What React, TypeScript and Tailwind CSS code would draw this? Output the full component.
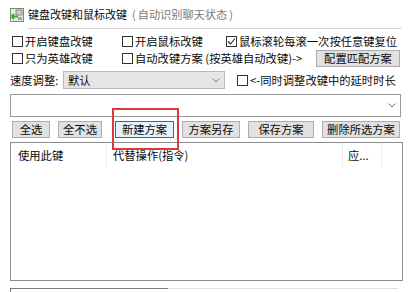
import React from "react";

const font = { fontFamily: '"Noto Sans CJK SC", "Noto Sans", sans-serif' };

function Box({ checked = false }: { checked?: boolean }) {
  return (
    <span className="w-[11px] h-[11px] border border-[#333333] bg-white flex items-center justify-center shrink-0">
      {checked && (
        <svg width="9" height="9" viewBox="0 0 9 9">
          <path d="M1 4.5 L3.5 7 L8 1.5" fill="none" stroke="#222" strokeWidth="1.1" />
        </svg>
      )}
    </span>
  );
}

function Check({ label, checked, className = "" }: { label: string; checked?: boolean; className?: string }) {
  return (
    <div className={`flex items-center gap-[2px] ${className}`}>
      <Box checked={checked} />
      <span className="leading-none text-[11.3px] text-[#0a0a0a]">{label}</span>
    </div>
  );
}

function Btn({ label, w, active = false }: { label: string; w: string; active?: boolean }) {
  return (
    <div
      className={`${w} h-[17px] flex items-center justify-center border text-[11.3px] leading-none text-[#0a0a0a] ${
        active ? "bg-[#e5f1fb] border-[#0078d7]" : "bg-[#e1e1e1] border-[#adadad]"
      }`}
    >
      {label}
    </div>
  );
}

function Chevron() {
  return (
    <svg width="8" height="5" viewBox="0 0 8 5">
      <path d="M0.5 0.5 L4 4 L7.5 0.5" fill="none" stroke="#777" strokeWidth="1" />
    </svg>
  );
}

export default function App() {
  return (
    <div className="w-[415px] h-[292px] bg-white overflow-hidden flex flex-col" style={font}>
      {/* Title */}
      <div className="flex items-center h-[18px] mt-[6px] pl-[10px]">
        <svg width="14" height="14" viewBox="0 0 14 14" className="shrink-0">
          <rect x="0.5" y="0.5" width="13" height="13" fill="#e8eee4" stroke="#7c8a78" />
          <rect x="6" y="2" width="6" height="5" fill="#c9d3c4" stroke="#6f7c6b" strokeWidth="0.8" />
          <path d="M1.5 8.5 H8 M1.5 8.5 L4 6 M1.5 8.5 L4 11" stroke="#3aa635" strokeWidth="1.8" fill="none" />
          <rect x="8" y="9" width="4" height="3" fill="#9aa896" />
        </svg>
        <span className="ml-[4px] text-[11px] leading-none text-[#0a0a0a]">键盘改键和鼠标改键</span>
        <span className="ml-[5px] text-[11px] leading-none text-[#7a7a7a]">(</span>
        <span className="ml-[2px] text-[11.2px] leading-none text-[#7a7a7a]">自动识别聊天状态</span>
        <span className="ml-[2px] text-[11px] leading-none text-[#7a7a7a]">)</span>
      </div>
      <div className="mt-[4px] ml-[28px] mr-[13px] h-px bg-[#d6d6d6]" />

      {/* Row 1 */}
      <div className="flex items-center h-[16px] mt-[5px] pl-[12px]">
        <Check label="开启键盘改键" className="w-[110px]" />
        <Check label="开启鼠标改键" className="w-[104px]" />
        <Check label="鼠标滚轮每滚一次按任意键复位" checked />
      </div>

      {/* Row 2 */}
      <div className="flex items-center h-[18px] pl-[12px]">
        <Check label="只为英雄改键" className="w-[110px]" />
        <Check label="自动改键方案 (按英雄自动改键)->" className="w-[194px]" />
        <Btn label="配置匹配方案" w="w-[84px]" />
      </div>

      {/* Row 3 */}
      <div className="flex items-center h-[18px] mt-[4px] pl-[10px]">
        <span className="text-[11.3px] leading-none text-[#0a0a0a] w-[53px]">速度调整:</span>
        <div className="w-[162px] h-[18px] bg-[#e5e5e5] border border-[#b9b9b9] flex items-center pl-[4px] pr-[4px]">
          <span className="text-[11.3px] leading-none text-[#0a0a0a] flex-1">默认</span>
          <Chevron />
        </div>
        <Check label="<-同时调整改键中的延时时长" className="ml-[12px]" />
      </div>

      {/* Row 4 */}
      <div className="mt-[5px] ml-[10px] w-[391px] h-[23px] border border-[#9a9a9a] bg-white flex items-center justify-end pr-[4px]">
        <Chevron />
      </div>

      {/* Row 5 buttons */}
      <div className="flex items-center h-[17px] mt-[4px] pl-[12px]">
        <Btn label="全选" w="w-[38px]" />
        <div className="w-[8px]" />
        <Btn label="全不选" w="w-[44px]" />
        <div className="w-[13px]" />
        <div className="relative">
          <Btn label="新建方案" w="w-[59px]" active />
          <div className="absolute left-[-3px] top-[-13px] w-[67px] h-[42px] border-2 border-[#d93a3a]" />
        </div>
        <div className="w-[8px]" />
        <Btn label="方案另存" w="w-[58px]" />
        <div className="w-[8px]" />
        <Btn label="保存方案" w="w-[66px]" />
        <div className="w-[8px]" />
        <Btn label="删除所选方案" w="w-[78px]" />
      </div>

      {/* List */}
      <div className="mt-[4px] ml-[10px] w-[393px] h-[140px] border border-[#8c8c8c] bg-white flex flex-col">
        <div className="flex h-[24px] items-stretch">
          <div className="w-[96px] flex items-center pl-[7px] border-r border-[#ececec] text-[11.3px] leading-none text-[#0a0a0a]">
            使用此键
          </div>
          <div className="w-[236px] flex items-center pl-[6px] border-r border-[#ececec] text-[11.3px] leading-none text-[#0a0a0a]">
            代替操作(指令)
          </div>
          <div className="w-[39px] flex items-center pl-[5px] border-r border-[#ececec] text-[11.3px] leading-none text-[#0a0a0a]">
            应...
          </div>
        </div>
      </div>

      {/* bottom partial box */}
      <div className="mt-[7px] ml-[10px] flex">
        <div className="w-[158px] h-[4px] border-t border-l border-[#7a7a7a]" />
        <div className="w-[230px] h-[4px] border-t border-[#e2e2e2]" />
      </div>
    </div>
  );
}
